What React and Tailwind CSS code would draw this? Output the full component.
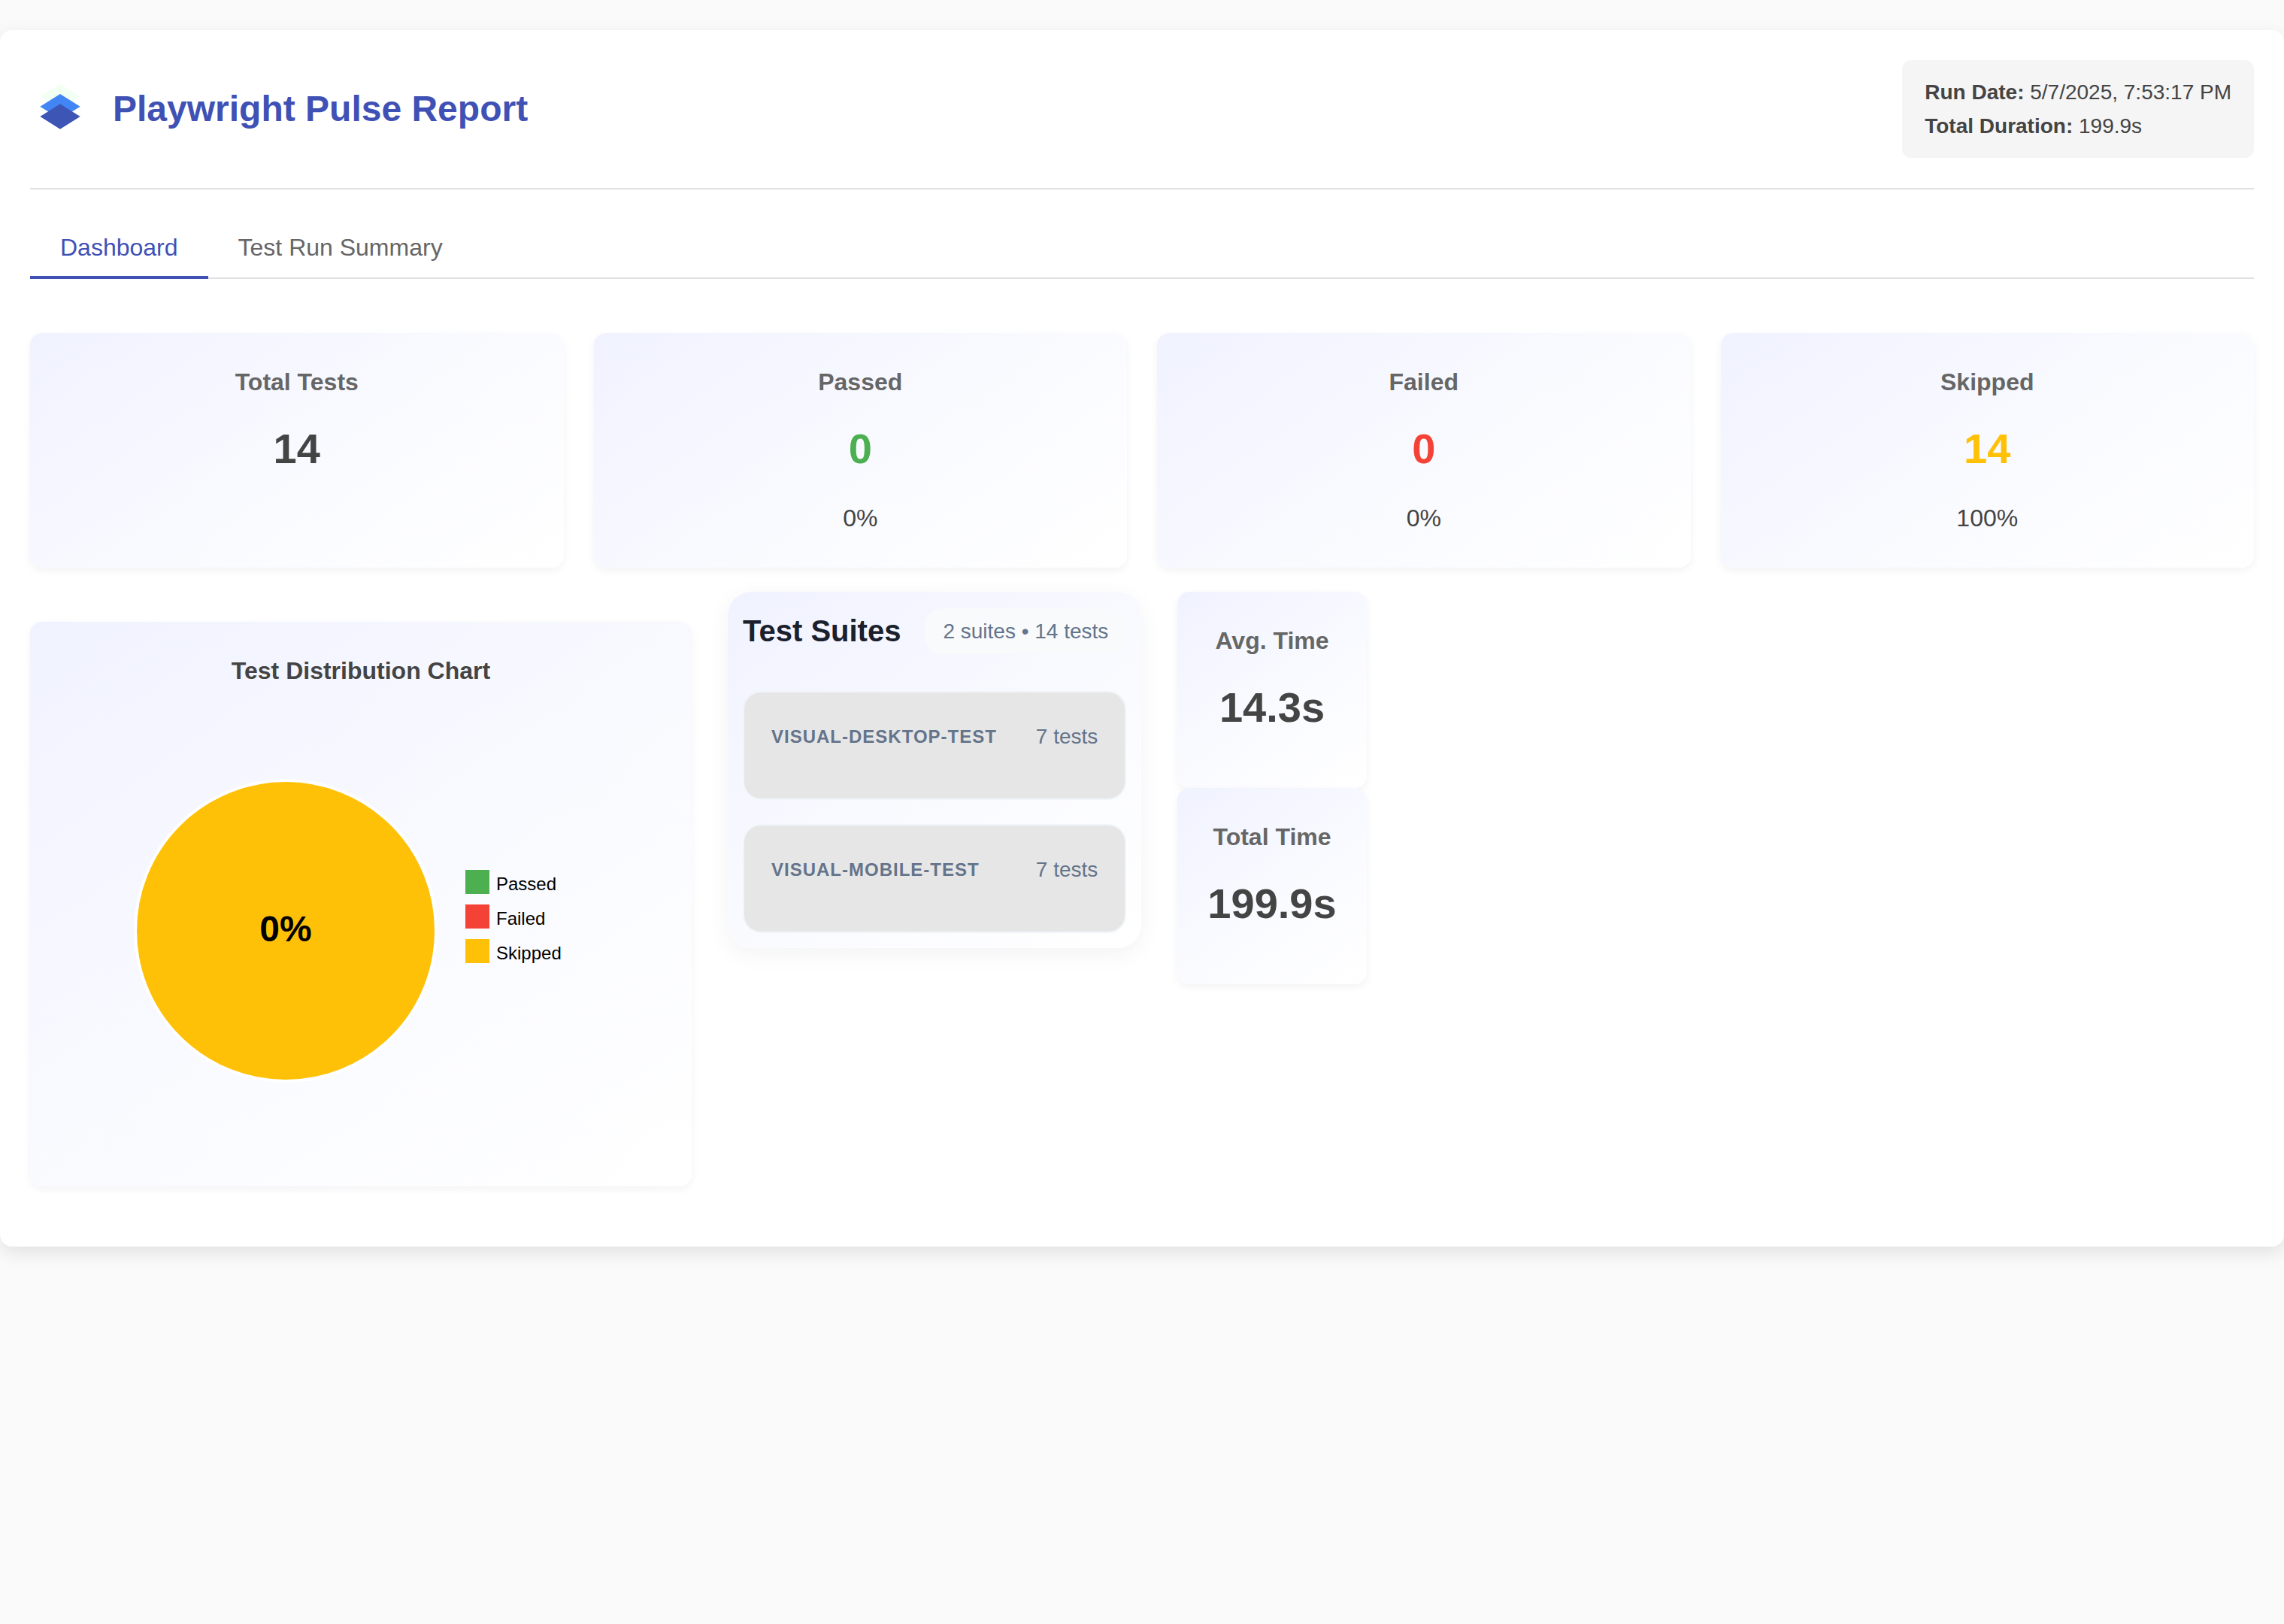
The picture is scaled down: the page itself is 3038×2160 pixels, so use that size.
import { useState } from 'react';

const TABS = ['Dashboard', 'Test Run Summary'];

const STATS = [
  { label: 'Total Tests', value: '14', color: 'text-[#444444]' },
  { label: 'Passed', value: '0', percent: '0%', color: 'text-[#4caf50]' },
  { label: 'Failed', value: '0', percent: '0%', color: 'text-[#f44336]' },
  { label: 'Skipped', value: '14', percent: '100%', color: 'text-[#ffc107]' },
];

const TIMES = [
  { label: 'Avg. Time', value: '14.3s' },
  { label: 'Total Time', value: '199.9s' },
];

const SUITES = [
  { name: 'visual-desktop-test', count: 7 },
  { name: 'visual-mobile-test', count: 7 },
];

const LEGEND = [
  { label: 'Passed', color: '#4caf50' },
  { label: 'Failed', color: '#f44336' },
  { label: 'Skipped', color: '#ffc107' },
];

function Logo() {
  return (
    <svg viewBox="0 0 24 24" className="w-20 h-20 shrink-0" aria-hidden="true">
      <path d="M12 2L4 7l8 5 8-5-8-5z" fill="#f2fff3" />
      <path d="M12 6L4 11l8 5 8-5-8-5z" fill="#4285f4" />
      <path d="M12 10L4 15l8 5 8-5-8-5z" fill="#3d55b4" />
    </svg>
  );
}

function StatCard({ label, value, percent, color = 'text-[#444444]' }) {
  return (
    <div className="p-10 rounded-2xl text-center bg-linear-[145deg,#f0f2ff,#f9faff_50%,#ffffff] shadow-[0_4px_12px_rgba(0,0,0,0.05)]">
      <h3 className="mb-5 text-[32px] leading-[51px] font-bold text-[#666666]">{label}</h3>
      <div className={`mb-6 text-[56px] leading-[86px] font-bold ${color}`}>{value}</div>
      {percent && <div className="text-[32px] leading-[51px]">{percent}</div>}
    </div>
  );
}

function DistributionChart() {
  return (
    <div className="my-10 p-10 rounded-2xl bg-linear-[145deg,#f0f2ff,#f9faff_50%,#ffffff] shadow-[0_4px_12px_rgba(0,0,0,0.05)]">
      <h3 className="mb-5 text-center text-[32px] leading-[51px] font-bold">Test Distribution Chart</h3>
      <svg viewBox="0 0 800 600" className="w-[800px] max-w-full" role="img" aria-label="Test distribution">
        <circle cx="300" cy="300" r="200" fill="#ffc107" stroke="#ffffff" strokeWidth="4" />
        <text x="300" y="314" textAnchor="middle" fontSize="48" fontWeight="bold" fill="#000000">
          0%
        </text>
        {LEGEND.map((item, i) => (
          <g key={item.label} transform={`translate(539 ${219 + i * 46})`}>
            <rect width="32" height="32" fill={item.color} />
            <text x="41" y="27" fontSize="24" fill="#000000">
              {item.label}
            </text>
          </g>
        ))}
      </svg>
    </div>
  );
}

function SuitesPanel() {
  return (
    <div className="p-5 rounded-[32px] bg-linear-[145deg,#f0f2ff,#f9faff_50%,#ffffff] shadow-[0_8px_32px_rgba(0,0,0,0.05)]">
      <div className="mb-12 flex items-center justify-between gap-8">
        <h2 className="text-[40px] leading-16 font-bold text-[#1a202c]">Test Suites</h2>
        <span className="px-6 py-2 rounded-3xl bg-[#f8fafc] text-[28px] leading-[45px] text-[#64748b]">
          2 suites • 14 tests
        </span>
      </div>
      <div className="flex flex-col gap-8">
        {SUITES.map((suite) => (
          <div
            key={suite.name}
            className="p-9 rounded-3xl border-2 border-[#f1f5f9] bg-[#e6e6e6] text-[#64748b]"
          >
            <div className="mb-6 flex items-center justify-between">
              <span className="text-[24px] leading-[38px] font-bold uppercase tracking-[1px]">
                {suite.name}
              </span>
              <span className="text-[28px] leading-[45px]">{suite.count} tests</span>
            </div>
          </div>
        ))}
      </div>
    </div>
  );
}

export default function App() {
  const [activeTab, setActiveTab] = useState('Dashboard');

  return (
    <div className="min-h-screen py-10 bg-[#fafafa] text-[#444444] font-['Liberation_Sans',Arial,sans-serif]">
      <main className="p-10 rounded-2xl bg-white shadow-[0_8px_24px_rgba(0,0,0,0.1)]">
        <header className="pb-10 mb-10 flex items-center justify-between border-b-2 border-[#e0e0e0]">
          <div className="flex items-center gap-[30px]">
            <Logo />
            <h1 className="text-[48px] leading-[76px] font-bold text-[#3f51b5]">Playwright Pulse Report</h1>
          </div>
          <div className="px-[30px] py-5 rounded-xl bg-[#f5f5f5] text-[28px] leading-[45px]">
            <strong>Run Date:</strong> 5/7/2025, 7:53:17 PM
            <br />
            <strong>Total Duration:</strong> 199.9s
          </div>
        </header>

        <nav className="mb-[72px] flex border-b-2 border-[#e0e0e0]">
          {TABS.map((tab) => (
            <button
              key={tab}
              type="button"
              onClick={() => setActiveTab(tab)}
              className={`px-10 py-5 -mb-0.5 border-b-4 text-[32px] leading-[35px] cursor-pointer ${
                activeTab === tab ? 'border-[#3f51b5] text-[#3f51b5]' : 'border-transparent text-[#666666]'
              }`}
            >
              {tab}
            </button>
          ))}
        </nav>

        <section className="mb-8 grid grid-cols-4 gap-10">
          {STATS.map((stat) => (
            <StatCard key={stat.label} {...stat} />
          ))}
        </section>

        <section className="flex items-start gap-12">
          <DistributionChart />
          <SuitesPanel />
          <div className="flex flex-col">
            {TIMES.map((time) => (
              <StatCard key={time.label} {...time} />
            ))}
          </div>
        </section>
      </main>
    </div>
  );
}
